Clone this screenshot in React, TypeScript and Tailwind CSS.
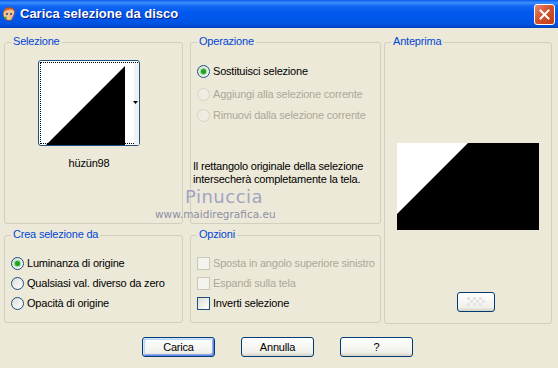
import React from "react";

const Group: React.FC<{ title: string; className?: string; children?: React.ReactNode }> = ({ title, className, children }) => (
  <div className={`relative border border-[#D0D0BF] rounded-[3px] ${className ?? ""}`}>
    <span className="absolute -top-[8px] left-[6px] bg-[#ECE9D8] px-[2px] leading-[13px] text-[#0046D5]">{title}</span>
    {children}
  </div>
);

const Radio: React.FC<{ label: string; checked?: boolean; disabled?: boolean }> = ({ label, checked, disabled }) => (
  <div className="flex items-center gap-[3px] h-[13px]">
    <span
      className={`w-[13px] h-[13px] rounded-full border flex items-center justify-center ${
        disabled
          ? "border-[#D6D3C4] bg-[#EFEDE2]"
          : "border-[#1C5180] bg-[linear-gradient(135deg,#DCDCD7,#FFFFFF)]"
      }`}
    >
      {checked && <span className="w-[5px] h-[5px] rounded-full bg-[#21A121] shadow-[0_0_1px_1px_#8DD98D]" />}
    </span>
    <span className={disabled ? "text-[#ACA899]" : "text-black"}>{label}</span>
  </div>
);

const Check: React.FC<{ label: string; disabled?: boolean }> = ({ label, disabled }) => (
  <div className="flex items-center gap-[3px] h-[13px]">
    <span
      className={`w-[13px] h-[13px] border ${
        disabled ? "border-[#CAC8BB] bg-[#F4F3EE]" : "border-[#1C5180] bg-[linear-gradient(135deg,#DCDCD7,#FFFFFF)]"
      }`}
    />
    <span className={disabled ? "text-[#ACA899]" : "text-black"}>{label}</span>
  </div>
);

const XpButton: React.FC<{ label: string; primary?: boolean }> = ({ label, primary }) => (
  <button
    className={`w-[73px] h-[20px] rounded-[3px] border border-[#003C74] bg-[linear-gradient(to_bottom,#FFFFFF,#F0F0EA_80%,#D6D0C5)] text-black leading-none ${
      primary
        ? "shadow-[inset_1px_1px_0_#CEE7FF,inset_-1px_-1px_0_#6982EE,inset_2px_2px_0_#BCD4F6,inset_-2px_-2px_0_#89ADE4]"
        : ""
    }`}
  >
    {label}
  </button>
);

export default function App() {
  return (
    <div className="relative w-[558px] h-[368px] bg-[#ECE9D8] overflow-hidden text-[11px] tracking-[-0.2px] font-['Liberation_Sans',Arial,sans-serif]">
      {/* title bar */}
      <div className="h-[28px] flex items-center bg-[linear-gradient(to_bottom,#0A5AE8_0%,#3D8FFF_10%,#1266F1_22%,#0058EE_45%,#0055E5_80%,#0048D0_95%,#003DB8_100%)]">
        <svg width="16" height="16" viewBox="0 0 16 16" className="ml-[2px]">
          <ellipse cx="7" cy="8" rx="6" ry="6.5" fill="#F4C28A" stroke="#8A4B1A" strokeWidth="0.8" />
          <path d="M2 6 C3 1, 11 0, 13 5 C10 3, 6 3, 2 6Z" fill="#E2561C" />
          <circle cx="5" cy="8" r="1" fill="#1E3FA8" />
          <circle cx="9" cy="8" r="1" fill="#1E3FA8" />
          <path d="M10 14 L15 3" stroke="#2C58D8" strokeWidth="1.6" />
          <circle cx="3.5" cy="12" r="1.2" fill="#2AA12A" />
        </svg>
        <span className="ml-[2px] text-white font-bold text-[13px] tracking-normal [text-shadow:1px_1px_0_#0A1E80]">
          Carica selezione da disco
        </span>
        <div className="ml-auto mr-[3px] w-[21px] h-[21px] rounded-[3px] border border-white bg-[linear-gradient(135deg,#E98A70,#D4532E_45%,#C13A18)] flex items-center justify-center">
          <svg width="11" height="11" viewBox="0 0 11 11">
            <path d="M1.5 1.5 L9.5 9.5 M9.5 1.5 L1.5 9.5" stroke="white" strokeWidth="2" strokeLinecap="square" />
          </svg>
        </div>
      </div>

      {/* body */}
      <div className="pt-[14px] pl-[4px] flex">
        <div className="w-[179px] flex flex-col gap-[11px]">
          <Group title="Selezione" className="h-[182px]">
            <div className="pt-[17px] pl-[33px] w-[135px]">
              <div className="w-[102px] h-[86px] border border-[#1C5180] rounded-[3px] bg-white p-[1px]">
                <div className="relative w-full h-full border border-dotted border-black">
                  <svg width="98" height="82" viewBox="0 0 98 82">
                    <polygon points="5,82 84,3 84,82" fill="black" />
                    <rect x="93" y="0" width="5" height="82" fill="#F1F1F1" />
                    <polygon points="92,38 97,38 94.5,41" fill="black" />
                  </svg>
                </div>
              </div>
              <div className="w-[102px] mt-[11px] text-center leading-[13px]">hüzün98</div>
            </div>
          </Group>
          <Group title="Crea selezione da" className="h-[88px]">
            <div className="pt-[21px] pl-[6px] flex flex-col gap-[7px]">
              <Radio label="Luminanza di origine" checked />
              <Radio label="Qualsiasi val. diverso da zero" />
              <Radio label="Opacità di origine" />
            </div>
          </Group>
        </div>

        <div className="ml-[7px] w-[191px] flex flex-col gap-[11px]">
          <Group title="Operazione" className="h-[182px]">
            <div className="pt-[22px] pl-[6px] flex flex-col">
              <Radio label="Sostituisci selezione" checked />
              <div className="mt-[10px]">
                <Radio label="Aggiungi alla selezione corrente" disabled />
              </div>
              <div className="mt-[8px]">
                <Radio label="Rimuovi dalla selezione corrente" disabled />
              </div>
            </div>
            <p className="mt-[38px] pl-[2px] leading-[13px]">
              Il rettangolo originale della selezione
              <br />
              intersecherà completamente la tela.
            </p>
          </Group>
          <Group title="Opzioni" className="h-[88px]">
            <div className="pt-[21px] pl-[6px] flex flex-col gap-[7px]">
              <Check label="Sposta in angolo superiore sinistro" disabled />
              <Check label="Espandi sulla tela" disabled />
              <Check label="Inverti selezione" />
            </div>
          </Group>
        </div>

        <div className="ml-[3px] w-[168px]">
          <Group title="Anteprima" className="h-[282px]">
            <svg width="142" height="87" viewBox="0 0 142 87" className="ml-[12px] mt-[100px] block">
              <rect width="142" height="87" fill="black" />
              <polygon points="0,0 71,0 0,71" fill="white" />
            </svg>
            <div className="pl-[72px] mt-[62px]">
              <div className="w-[38px] h-[20px] rounded-[3px] border border-[#003C74] bg-[linear-gradient(to_bottom,#FFFFFF,#F0F0EA_80%,#D6D0C5)] flex items-center justify-center">
                <svg width="18" height="10" viewBox="0 0 18 10">
                  <rect x="0" y="0" width="3" height="3" fill="#E4E4E4" />
                  <rect x="6" y="0" width="3" height="3" fill="#E4E4E4" />
                  <rect x="12" y="0" width="3" height="3" fill="#E4E4E4" />
                  <rect x="3" y="3" width="3" height="3" fill="#E4E4E4" />
                  <rect x="9" y="3" width="3" height="3" fill="#E4E4E4" />
                  <rect x="15" y="3" width="3" height="3" fill="#E4E4E4" />
                  <rect x="0" y="6" width="3" height="3" fill="#E4E4E4" />
                  <rect x="6" y="6" width="3" height="3" fill="#E4E4E4" />
                  <rect x="12" y="6" width="3" height="3" fill="#E4E4E4" />
                </svg>
              </div>
            </div>
          </Group>
        </div>
      </div>

      {/* buttons */}
      <div className="mt-[13px] pl-[142px] flex gap-[26px]">
        <XpButton label="Carica" primary />
        <XpButton label="Annulla" />
        <XpButton label="?" />
      </div>

      {/* watermark */}
      <div className="absolute left-[185px] top-[187px] text-[18px] leading-[20px] tracking-[0.5px] text-[#A3A3C2] font-['DejaVu_Sans',sans-serif]">
        Pinuccia
      </div>
      <div className="absolute left-[155px] top-[208px] text-[10.5px] leading-[13px] tracking-normal text-[#8E8EA6] font-['DejaVu_Sans',sans-serif]">
        www.maidiregrafica.eu
      </div>
    </div>
  );
}
